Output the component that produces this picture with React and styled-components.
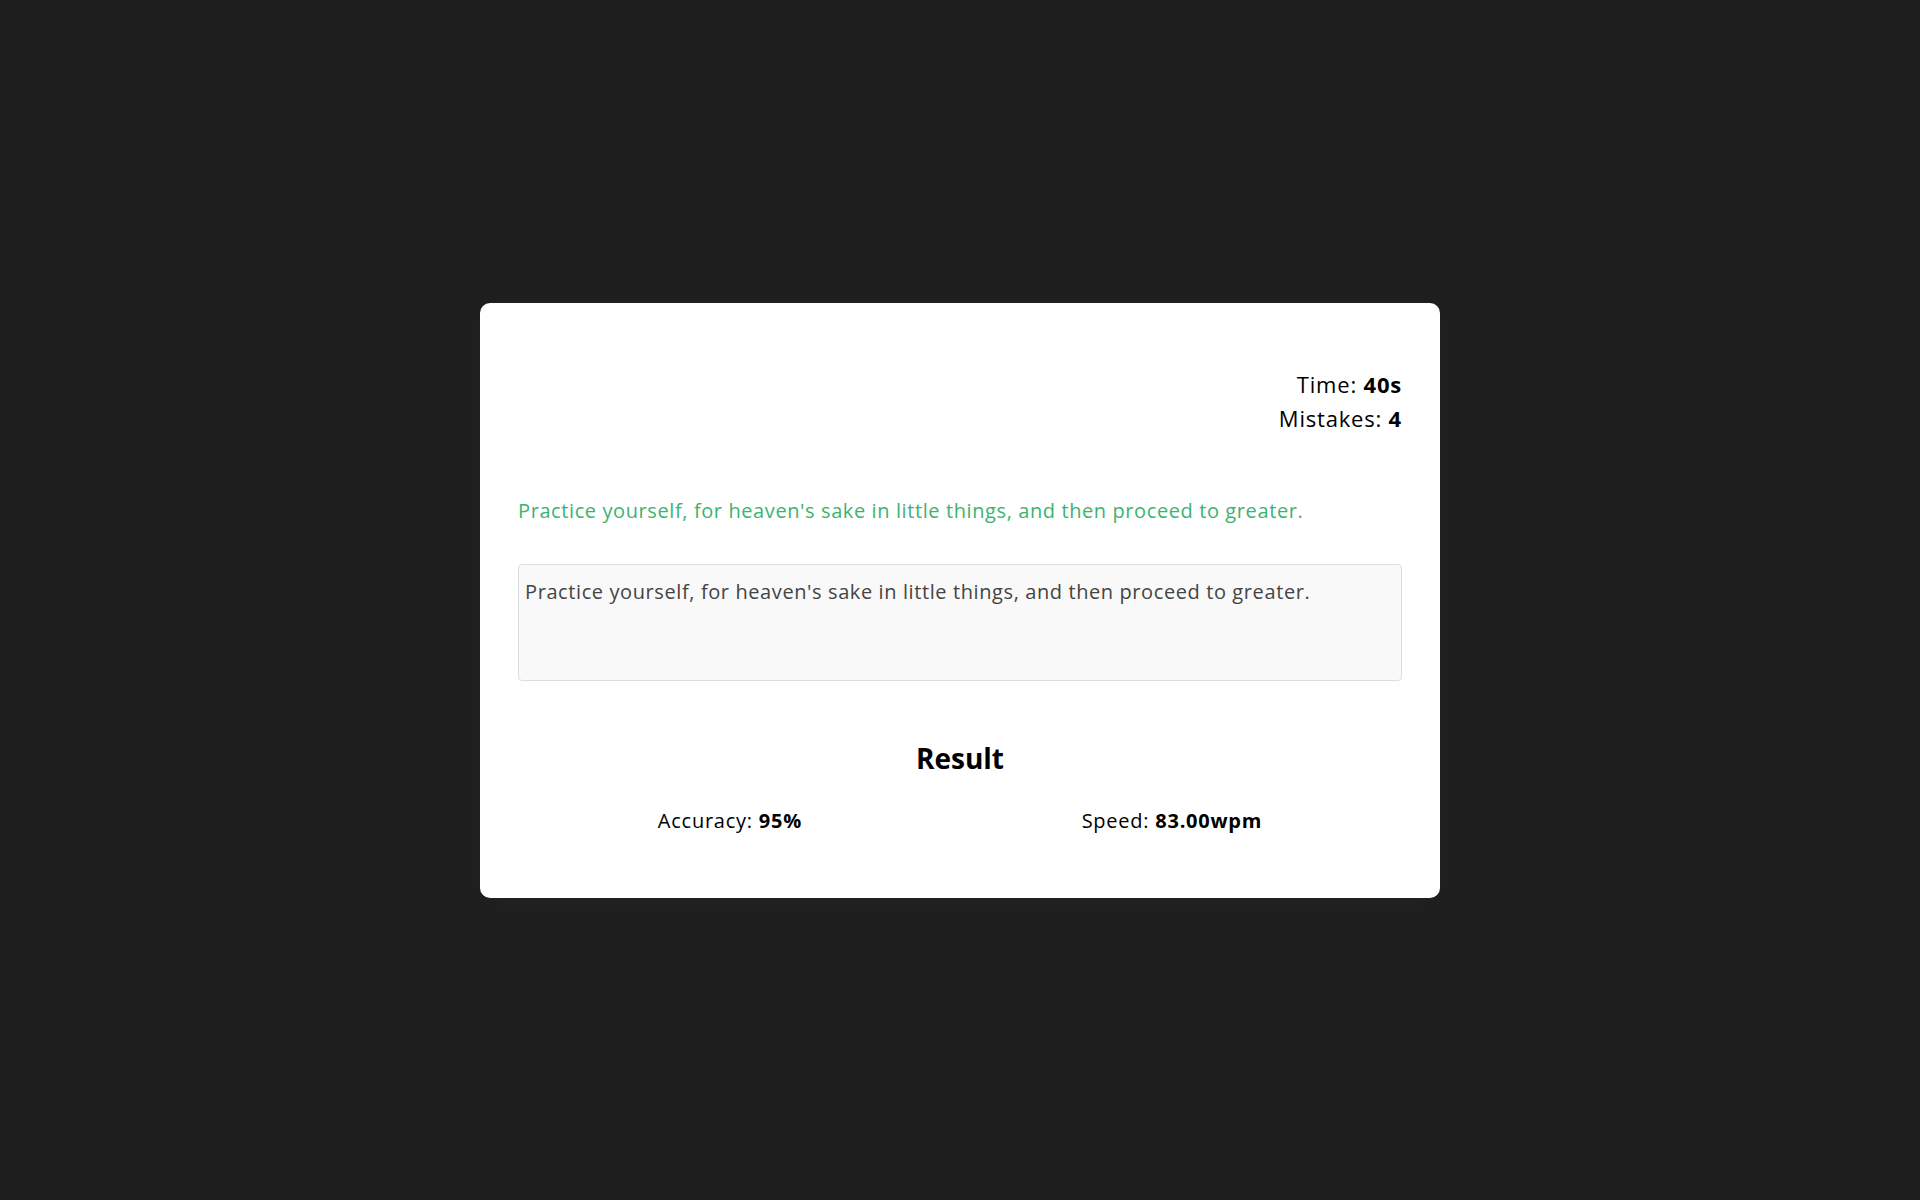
import React from 'react';
import styled, { createGlobalStyle } from 'styled-components';

const GlobalStyle = createGlobalStyle`
  * { box-sizing: border-box; }
  html, body { margin: 0; padding: 0; }
  body {
    background: #1e1e1e;
    font-family: "Open Sans", "Liberation Sans", sans-serif;
  }
`;

const Page = styled.div`
  min-height: 100vh;
  display: flex;
  align-items: center;
  justify-content: center;
`;

const Card = styled.div`
  width: 960px;
  background: #fff;
  border-radius: 10px;
  padding: 38px;
  box-shadow: 0 6px 40px rgba(255, 255, 255, 0.03);
`;

const Stats = styled.div`
  padding-top: 26px;
  text-align: right;
  font-size: 22px;
  line-height: 34px;
  letter-spacing: 0.8px;
  color: #000;
`;

const Quote = styled.p`
  margin: 61px 0 0;
  font-size: 20px;
  line-height: 30px;
  letter-spacing: 0.6px;
  color: #3cb371;
`;

const Input = styled.textarea`
  display: block;
  width: 100%;
  height: 117px;
  margin-top: 38px;
  padding: 12px 6px;
  border: 1px solid #ddd;
  border-radius: 4px;
  background: #f9f9f9;
  color: #444;
  font-family: inherit;
  font-size: 20px;
  line-height: 30px;
  letter-spacing: 0.6px;
  resize: none;
  outline: none;
`;

const ResultTitle = styled.h2`
  margin: 59px 0 0;
  text-align: center;
  font-size: 28px;
  line-height: 36px;
  font-weight: 700;
  color: #000;
`;

const ResultRow = styled.div`
  display: flex;
  justify-content: space-around;
  margin: 30px 0 24px;
  font-size: 20px;
  line-height: 30px;
  letter-spacing: 0.75px;
  color: #000;
`;

const App = () => {
  const quote = "Practice yourself, for heaven's sake in little things, and then proceed to greater.";
  return (
    <>
      <GlobalStyle />
      <Page>
        <Card>
          <Stats>
            <div>Time: <b>40s</b></div>
            <div>Mistakes: <b>4</b></div>
          </Stats>
          <Quote>{quote}</Quote>
          <Input defaultValue={quote} readOnly />
          <ResultTitle>Result</ResultTitle>
          <ResultRow>
            <span>Accuracy: <b>95%</b></span>
            <span>Speed: <b>83.00wpm</b></span>
          </ResultRow>
        </Card>
      </Page>
    </>
  );
};

export default App;
